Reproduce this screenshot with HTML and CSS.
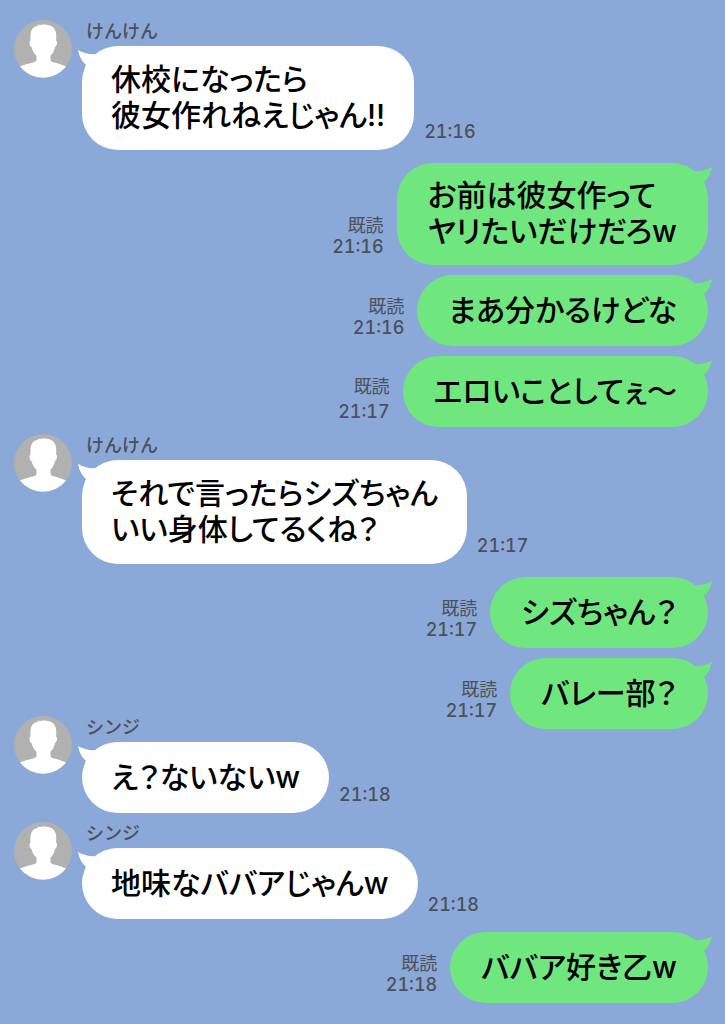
FILE: index.html
```
<!DOCTYPE html>
<html lang="ja">
<head>
  <meta charset="UTF-8">
  <meta name="viewport" content="width=device-width, initial-scale=1.0">
  <title>トーク</title>
  <link rel="stylesheet" href="styles.css">
</head>
<body>
  <svg class="defs" aria-hidden="true">
    <symbol id="avatar" viewBox="0 0 58 58">
      <circle cx="29" cy="29" r="29" fill="#b1b1b1"/>
      <path fill="#fff" d="M6 46.500C10 44.500 16 43 20 42.200Q22.500 41.500 22.500 40V35.500C20 33.500 18.500 31 17.500 27Q15.500 26.500 15.500 21.500L16.500 20.500C16 12 17.500 6.500 24 6L23.500 4.500L26 5C34 3.500 41 6 42 13Q42.500 17 42 20.500L43 21.500Q43 26 41 27C40 31 39 33.500 36.500 35.500V40Q36.500 41.500 39 42.200C43 43 48 44.500 52 46.500A29 29 0 0 1 6 46.500Z"/>
    </symbol>
    <symbol id="tail" viewBox="0 0 24 22">
      <path d="M1 1Q9 6 20 5L22 12L10 20L8 18L9 16Q3 11 1 1Z"/>
    </symbol>
  </svg>

  <main class="chat">
    <article class="message received">
      <svg class="avatar"><use href="#avatar"/></svg>
      <div class="content">
        <h2 class="name">けんけん</h2>
        <div class="line">
          <p class="bubble"><svg class="tail"><use href="#tail"/></svg>休校になったら<br>彼女作れねえじゃん!!</p>
          <div class="meta"><time>21:16</time></div>
        </div>
      </div>
    </article>

    <article class="message sent turn">
      <div class="meta"><span>既読</span><time>21:16</time></div>
      <p class="bubble"><svg class="tail"><use href="#tail"/></svg>お前は彼女作って<br>ヤリたいだけだろw</p>
    </article>

    <article class="message sent">
      <div class="meta"><span>既読</span><time>21:16</time></div>
      <p class="bubble"><svg class="tail"><use href="#tail"/></svg>まあ分かるけどな</p>
    </article>

    <article class="message sent">
      <div class="meta loose"><span>既読</span><time>21:17</time></div>
      <p class="bubble"><svg class="tail"><use href="#tail"/></svg>エロいことしてぇ〜</p>
    </article>

    <article class="message received">
      <svg class="avatar"><use href="#avatar"/></svg>
      <div class="content">
        <h2 class="name">けんけん</h2>
        <div class="line">
          <p class="bubble"><svg class="tail"><use href="#tail"/></svg>それで言ったらシズちゃん<br>いい身体してるくね？</p>
          <div class="meta"><time>21:17</time></div>
        </div>
      </div>
    </article>

    <article class="message sent turn">
      <div class="meta"><span>既読</span><time>21:17</time></div>
      <p class="bubble"><svg class="tail"><use href="#tail"/></svg>シズちゃん？</p>
    </article>

    <article class="message sent">
      <div class="meta"><span>既読</span><time>21:17</time></div>
      <p class="bubble"><svg class="tail"><use href="#tail"/></svg>バレー部？</p>
    </article>

    <article class="message received tucked">
      <svg class="avatar"><use href="#avatar"/></svg>
      <div class="content">
        <h2 class="name">シンジ</h2>
        <div class="line">
          <p class="bubble"><svg class="tail"><use href="#tail"/></svg>え？ないないw</p>
          <div class="meta"><time>21:18</time></div>
        </div>
      </div>
    </article>

    <article class="message received">
      <svg class="avatar"><use href="#avatar"/></svg>
      <div class="content">
        <h2 class="name">シンジ</h2>
        <div class="line">
          <p class="bubble"><svg class="tail"><use href="#tail"/></svg>地味なババアじゃんw</p>
          <div class="meta low"><time>21:18</time></div>
        </div>
      </div>
    </article>

    <article class="message sent turn">
      <div class="meta"><span>既読</span><time>21:18</time></div>
      <p class="bubble"><svg class="tail"><use href="#tail"/></svg>ババア好き乙w</p>
    </article>
  </main>
</body>
</html>
```
FILE: styles.css
```
* {
  box-sizing: border-box;
}

body {
  margin: 0;
  min-height: 100vh;
  background-color: #8ba9d8;
  color: #000;
  font-family: Inter, "Noto Sans CJK JP", sans-serif;
  font-weight: 500;
}

.defs {
  display: none;
}

.chat {
  padding: 20px 17px 20px 14px;
}

.message {
  display: flex;
  margin-top: 10px;
}

.received {
  gap: 10px;
  margin-top: 7px;
}

.received + .received {
  margin-top: 9px;
}

.message:first-child {
  margin-top: 0;
}

.sent {
  justify-content: flex-end;
  align-items: flex-end;
  gap: 13px;
}

/* first reply after the other person */
.turn {
  margin-top: 13px;
}

/* name sits beside the end of the previous bubble */
.tucked {
  margin-top: -13px;
}

.avatar {
  flex: none;
  width: 58px;
  height: 58px;
}

.name {
  margin: 0;
  padding-left: 4px;
  height: 26px;
  font-size: 18px;
  line-height: 24px;
  font-weight: 500;
  color: #4b5159;
}

.line {
  display: flex;
  align-items: flex-end;
  gap: 10px;
}

.bubble {
  position: relative;
  display: flex;
  flex-direction: column;
  justify-content: center;
  margin: 0;
  min-height: 71px;
  padding: 15px 29px 17px;
  border-radius: 36px;
  background-color: #fff;
  font-size: 30px;
  line-height: 36px;
  font-feature-settings: "palt";
}

.sent .bubble {
  padding: 14px 31px 16px;
  background-color: #70e77e;
}

.tail {
  position: absolute;
  top: 3px;
  left: -5px;
  width: 24px;
  height: 22px;
  fill: #fff;
}

.sent .tail {
  left: auto;
  right: -5px;
  fill: #70e77e;
  transform: scaleX(-1);
}

.meta {
  display: flex;
  flex-direction: column;
  align-items: flex-end;
  padding-bottom: 8px;
  font-size: 18px;
  line-height: 21px;
  font-weight: 400;
  color: #4b5159;
}

.meta time {
  font-weight: 500;
  font-variant-numeric: tabular-nums;
}

.loose {
  gap: 4px;
  padding-bottom: 5px;
}

.low {
  padding-bottom: 4px;
}
```
